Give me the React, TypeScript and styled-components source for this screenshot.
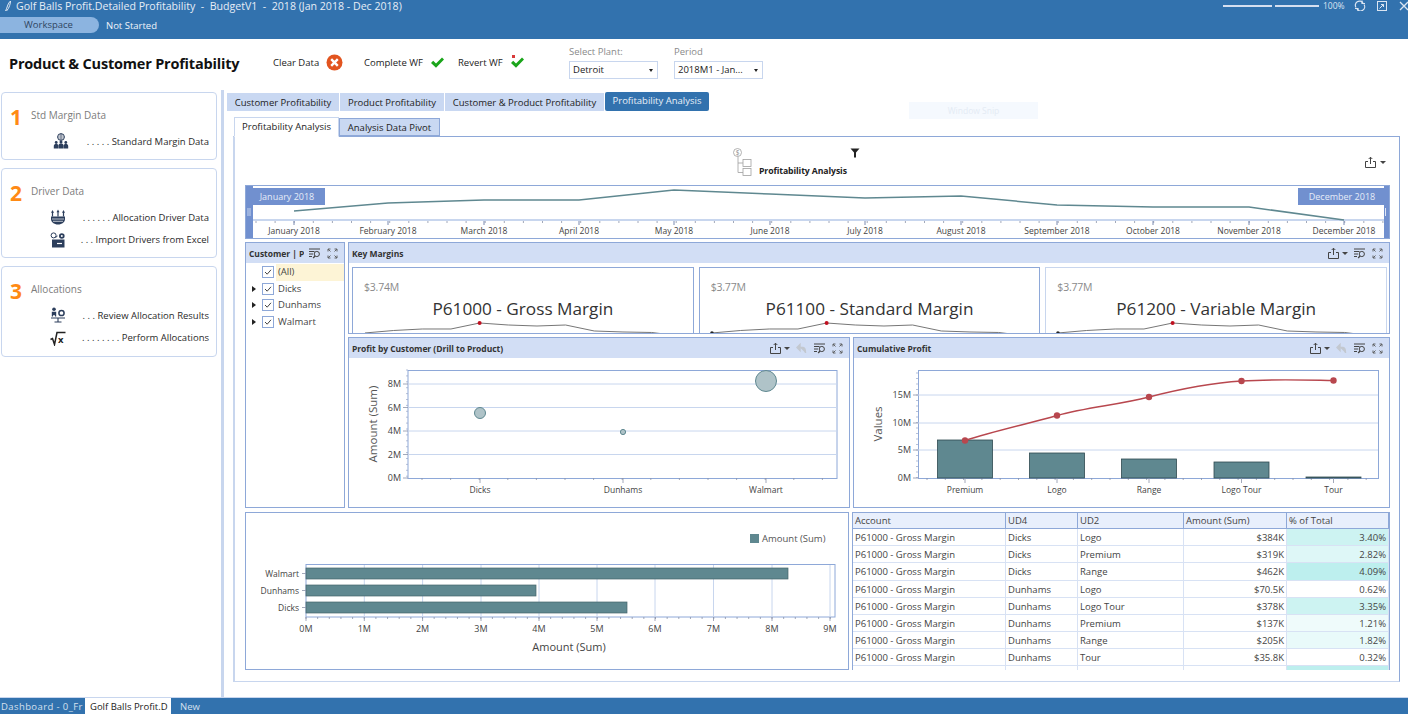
import React from "react";
import styled, { createGlobalStyle } from "styled-components";

const FONT = '"Open Sans", "Noto Sans", "Liberation Sans", sans-serif';
const BLUE = "#3272ae";
const LINE = "#8ea8d8";
const PALE = "#c8d6ee";
const HEAD = "#d2def5";
const TEAL = "#5f8890";

const Global = createGlobalStyle`
  html, body { margin: 0; padding: 0; background: #fff; }
  body { font-family: ${FONT}; color: #333; }
`;

const Page = styled.div`
  width: 1408px; height: 714px; display: flex; flex-direction: column; overflow: hidden; position: relative; background: #fff;
`;
const TopBar = styled.header`
  height: 39px; background: ${BLUE}; color: #e6edf6; flex: none; display: flex; flex-direction: column;
`;
const TitleRow = styled.div`
  height: 17px; display: flex; align-items: flex-start; padding-left: 5px;
`;
const AppTitle = styled.div`
  font-size: 10.6px; line-height: 13px; margin-left: 5px; white-space: pre; flex: 1;
`;
const WindowTools = styled.div`
  display: flex; align-items: center; height: 11px; color: #dbe5f2; overflow: hidden; width: 185px;
`;
const ZoomTrack = styled.span<{ $w: number }>`
  width: ${(p) => p.$w}px; height: 2px; background: #d5dff0; margin-right: 3px; flex: none;
`;
const ZoomText = styled.span`
  font-size: 8.5px; margin: 0 9px 0 1px; width: 22px; flex: none;
`;
const WindowIcon = styled.svg`
  width: 12px; height: 12px; flex: none; margin-right: 10px; display: block;
`;
const StatusRow = styled.div`
  display: flex; align-items: center; height: 16px;
`;
const Pill = styled.div`
  width: 99px; height: 16px; background: #8cb4e0; border-radius: 0 8px 8px 0; color: #2f4560; font-size: 9.5px; line-height: 16px; text-align: center; padding-right: 2px; box-sizing: border-box;
`;
const StatusText = styled.span`
  font-size: 9.5px; margin-left: 7px; color: #f0f4fa;
`;

const HeaderRow = styled.div`
  height: 51px; flex: none; display: flex; align-items: flex-start; position: relative;
`;
const PageTitle = styled.h1`
  margin: 15px 0 0 9px; width: 264px; flex: none; font-size: 14.5px; line-height: 20px; font-weight: 700; color: #111; letter-spacing: -0.2px;
`;
const Action = styled.div<{ $w: number }>`
  width: ${(p) => p.$w}px; flex: none; display: flex; align-items: center; height: 20px; margin-top: 13px; font-size: 9.5px; color: #222; gap: 7px;
`;
const FieldGroup = styled.div<{ $w: number }>`
  width: ${(p) => p.$w}px; flex: none; margin-top: 6px; display: flex; flex-direction: column;
`;
const FieldLabel = styled.label`
  font-size: 9.5px; line-height: 14px; color: #8a8a8a; height: 16px;
`;
const SelectBox = styled.div<{ $w: number }>`
  width: ${(p) => p.$w}px; height: 18px; box-sizing: border-box; border: 1px solid ${PALE}; font-size: 9.5px; line-height: 16px; padding-left: 3px; color: #222; position: relative; white-space: nowrap;
  &::after { content: ""; position: absolute; right: 4px; top: 7px; border: 2.5px solid transparent; border-top: 3px solid #222; }
`;

const Main = styled.main`
  flex: 1; display: flex; min-height: 0;
`;
const Sidebar = styled.aside`
  width: 224px; flex: none; box-sizing: border-box; padding: 2px 4px 0 1px; display: flex; flex-direction: column; gap: 8px; border-right: 3px solid ${PALE};
`;
const StepCard = styled.section<{ $h: number }>`
  height: ${(p) => p.$h}px; box-sizing: border-box; border: 1px solid ${PALE}; border-radius: 4px; padding: 0 7px 0 8px;
`;
const StepHead = styled.div`
  display: flex; align-items: center; height: 37px; box-sizing: border-box; padding-top: 7px;
`;
const StepNum = styled.span`
  width: 21px; flex: none; color: #ff8a14; font-size: 21px; font-weight: 700; line-height: 30px; margin-top: 3px;
`;
const StepTitle = styled.span`
  font-size: 10px; color: #7c7c7c;
`;
const StepItem = styled.div`
  height: 22.5px; display: flex; align-items: center; font-size: 9.5px; color: #2a2a2a; white-space: pre;
`;
const StepIcon = styled.svg<{ $left?: number }>`
  width: 16px; height: 16px; flex: none; margin-left: ${(p) => p.$left ?? 40}px; display: block; color: #2c3e5c;
`;
const StepLabel = styled.span`
  margin-left: auto;
`;

const Content = styled.div`
  flex: 1; min-width: 0; padding: 2px 0 0 3px; display: flex; flex-direction: column; position: relative;
`;
const TabBar = styled.nav`
  display: flex; gap: 1px; height: 19px; align-items: flex-end; flex: none;
`;
const MainTab = styled.div<{ $w: number; $on?: boolean }>`
  width: ${(p) => p.$w}px; height: ${(p) => (p.$on ? 19 : 18)}px; box-sizing: border-box; background: ${(p) => (p.$on ? BLUE : "#c9d8f2")}; color: ${(p) => (p.$on ? "#e9f0f8" : "#222")}; border-radius: ${(p) => (p.$on ? "2px" : "0")}; font-size: 9.5px; line-height: ${(p) => (p.$on ? 18 : 20)}px; text-align: center; white-space: nowrap;
`;
const SubTabs = styled.nav`
  display: flex; height: 20px; margin: 5px 0 0 7px; align-items: flex-end; flex: none; position: relative; z-index: 1;
`;
const SubTab = styled.div<{ $w: number; $on?: boolean }>`
  width: ${(p) => p.$w}px; height: ${(p) => (p.$on ? 20 : 18)}px; box-sizing: border-box; background: ${(p) => (p.$on ? "#fff" : "#c9d8f2")}; color: #222; border: 1px solid ${(p) => (p.$on ? PALE : LINE)}; border-bottom: ${(p) => (p.$on ? "1px solid #fff" : `1px solid ${LINE}`)}; font-size: 9.5px; line-height: ${(p) => (p.$on ? 17 : 18)}px; text-align: center; white-space: nowrap; margin-bottom: ${(p) => (p.$on ? "-1px" : "0")};
`;
const Board = styled.div`
  width: 1167px; height: 546px; box-sizing: border-box; margin-left: 6px; border: 1px solid ${LINE}; border-left: 2px solid ${PALE}; border-bottom-color: ${PALE}; padding: 0 10px 0 10px; display: flex; flex-direction: column;
`;
const BoardHead = styled.div`
  height: 48px; flex: none; position: relative; display: flex;
`;
const BoardBrand = styled.div`
  margin-left: 488px; display: flex; align-items: flex-end; padding-bottom: 8px; position: relative; gap: 6px;
`;
const BrandText = styled.span`
  font-size: 8.7px; font-weight: 700; color: #222; line-height: 11px; letter-spacing: -0.1px;
`;
const FilterIcon = styled.svg`
  width: 10px; height: 10px; margin: 11px 0 0 -3px; display: block; align-self: flex-start;
`;
const BoardExport = styled.div`
  margin-left: auto; margin-right: 3px; margin-top: 18px; display: flex; align-items: center; height: 14px; gap: 3px;
`;
const Caret = styled.span`
  width: 0; height: 0; border: 3px solid transparent; border-top: 3.5px solid #444; margin-top: 3px;
`;
const TimelineBox = styled.div`
  width: 1145px; height: 54px; flex: none; box-sizing: border-box; border: 1px solid ${LINE};
`;
const Svg = styled.svg`
  display: block;
`;
const AxisText = styled.text<{ $size?: number; $fill?: string; $weight?: number }>`
  font-family: ${FONT}; font-size: ${(p) => p.$size ?? 8.5}px; fill: ${(p) => p.$fill ?? "#444"}; font-weight: ${(p) => p.$weight ?? 400};
`;
const Upper = styled.div`
  display: grid; grid-template-columns: 100px 1fr; gap: 3px; height: 266px; margin-top: 3px; width: 1145px; flex: none;
`;
const Panel = styled.section`
  border: 1px solid ${LINE}; box-sizing: border-box; min-width: 0; background: #fff; overflow: hidden;
`;
const PanelHead = styled.div`
  height: 20px; background: ${HEAD}; display: flex; align-items: center; padding: 0 5px 0 3px; font-size: 8.5px; font-weight: 700; color: #333; white-space: nowrap; overflow: hidden; letter-spacing: -0.05px;
`;
const HeadTitle = styled.span<{ $clip?: number }>`
  ${(p) => (p.$clip ? `width: ${p.$clip}px; overflow: hidden; flex: none;` : "")}
`;
const HeadTools = styled.div`
  margin-left: auto; display: flex; align-items: center; gap: 5px; flex: none;
`;
const ToolGroup = styled.span`
  display: flex; align-items: center; gap: 2px;
`;
const ToolIcon = styled.svg`
  width: 13px; height: 13px; display: block; flex: none;
`;
const FilterList = styled.ul`
  list-style: none; margin: 1px 0 0; padding: 0;
`;
const FilterRow = styled.li`
  height: 16.5px; display: flex; align-items: center; font-size: 9.5px; color: #444; position: relative; padding-left: 16px;
`;
const Arrow = styled.span`
  position: absolute; left: 6px; top: 5px; width: 0; height: 0; border: 3px solid transparent; border-left: 4px solid #222;
`;
const Check = styled.span`
  width: 10px; height: 10px; border: 1px solid ${LINE}; flex: none; display: flex; background: #fff; box-sizing: content-box;
`;
const FilterText = styled.span<{ $hl?: boolean }>`
  margin-left: 2px; padding-left: 2px; flex: 1; line-height: 16.5px; background: ${(p) => (p.$hl ? "#fdf4d6" : "transparent")};
`;
const Right = styled.div`
  display: flex; flex-direction: column; gap: 3px; min-width: 0;
`;
const KeyPanel = styled(Panel)`
  height: 92px; flex: none;
`;
const KeyBody = styled.div`
  display: flex; gap: 5px; padding: 4px 2px 0 3px;
`;
const KeyCard = styled.article<{ $pale?: boolean }>`
  flex: 1; min-width: 0; height: 67px; box-sizing: border-box; border: 1px solid ${(p) => (p.$pale ? PALE : LINE)}; border-bottom: none; overflow: hidden;
`;
const KeyValue = styled.div`
  font-size: 10.5px; line-height: 14px; color: #8a8a8a; margin: 12px 0 0 11px; letter-spacing: -0.2px;
`;
const KeyTitle = styled.div`
  font-size: 17.2px; line-height: 22px; color: #333; text-align: center; height: 22px; margin-top: 4px; white-space: nowrap;
`;
const ChartsRow = styled.div`
  display: grid; grid-template-columns: 502px 1fr; gap: 3px; height: 171px;
`;
const Lower = styled.div`
  display: grid; grid-template-columns: 604px 1fr; gap: 3px; height: 158px; margin-top: 4px; width: 1145px; flex: none;
`;
const TableGrid = styled.div`
  display: grid; grid-template-columns: 153px 72px 106px 103px 1fr; grid-auto-rows: 17.17px; height: 158px; overflow: hidden; border-top: 1px solid ${LINE}; border-right: 1px solid ${LINE}; border-left: 1px solid ${LINE}; box-sizing: border-box; font-size: 9.5px; color: #444;
`;
const HeadCell = styled.div`
  background: #e8effc; height: 16px; line-height: 15px; padding: 0 2px; border-right: 1px solid ${LINE}; border-bottom: 1px solid ${LINE}; white-space: nowrap; box-sizing: border-box;
`;
const Cell = styled.div<{ $num?: boolean; $bg?: string }>`
  line-height: 17px; padding: 0 2px; margin-top: -1px; height: 17.17px; box-sizing: border-box; border-right: 1px solid #d8e2f4; border-bottom: 1px solid #d8e2f4; text-align: ${(p) => (p.$num ? "right" : "left")}; background: ${(p) => p.$bg ?? "transparent"}; white-space: nowrap; overflow: hidden;
`;
const Footer = styled.footer`
  height: 17px; flex: none; box-sizing: border-box; border-top: 1px solid ${PALE}; background: ${BLUE}; display: flex; font-size: 9.5px; line-height: 18px; color: #d5e0ee;
`;
const FootTab = styled.div<{ $w: number; $pad: number; $on?: boolean; $track?: number }>`
  width: ${(p) => p.$w}px; flex: none; white-space: nowrap; overflow: hidden; background: ${(p) => (p.$on ? "#fff" : "transparent")}; color: ${(p) => (p.$on ? "#222" : "#d5e0ee")}; padding-left: ${(p) => p.$pad}px; box-sizing: border-box; letter-spacing: ${(p) => p.$track ?? 0}px;
`;
const Snip = styled.div`
  position: absolute; left: 685px; top: 12px; width: 129px; height: 17px; background: #f5f9fe; color: #e4ebf4; font-size: 8.5px; line-height: 17px; text-align: center;
`;

const ExportIcon = () => (
  <ToolIcon viewBox="0 0 13 13" fill="none" stroke="#444" strokeWidth="1">
    <path d="M4 5.5H1.5V11.5H11.5V5.5H9M6.5 8V1.2M4.7 3L6.5 1.2L8.3 3" />
  </ToolIcon>
);
const SearchIcon = () => (
  <ToolIcon viewBox="0 0 13 13" fill="none" stroke="#444" strokeWidth="1">
    <path d="M1 2H12M1 4.5H6.5M1 7H5M1 9.5H4" />
    <circle cx="8.8" cy="7" r="2.6" />
    <path d="M7 9L5.2 11" strokeWidth="1.3" />
  </ToolIcon>
);
const ExpandIcon = () => (
  <ToolIcon viewBox="0 0 13 13" fill="none" stroke="#555" strokeWidth="0.9">
    <path d="M2 4.5V2H4.5M2.2 2.2L4.5 4.5M8.5 2H11V4.5M10.8 2.2L8.5 4.5M2 8.5V11H4.5M2.2 10.8L4.5 8.5M11 8.5V11H8.5M10.8 10.8L8.5 8.5" />
  </ToolIcon>
);
const UndoIcon = () => (
  <ToolIcon viewBox="0 0 13 13" fill="none" stroke="#c3c8d0" strokeWidth="1.4">
    <path d="M2 5.5L5 2.5V8.5ZM5 5.5H8C10 5.5 10.5 7.5 10.5 11" fill="#c3c8d0" />
  </ToolIcon>
);
const CheckMark = () => (
  <svg width="10" height="10" viewBox="0 0 10 10" fill="none" stroke="#444" strokeWidth="1">
    <path d="M2 5L4.2 7.2L8 2.8" />
  </svg>
);
const GreenCheck = ({ dot }: { dot?: boolean }) => (
  <svg width="15" height="15" viewBox="0 0 15 15">
    {dot && <rect x="2" y="0" width="3" height="3" fill="#d83a3a" />}
    <path d="M1 8L3.2 5.8L6 8.6L12 2.5L14 4.6L6 12.8Z" fill="#1aa51a" />
  </svg>
);
const RedX = () => (
  <svg width="17" height="17" viewBox="0 0 17 17">
    <circle cx="8.5" cy="8.5" r="8" fill="#e2541f" />
    <path d="M5.2 5.2L11.8 11.8M11.8 5.2L5.2 11.8" stroke="#fff" strokeWidth="2.4" />
  </svg>
);

const IconStd = () => (
  <StepIcon $left={43} viewBox="0 0 16 16" fill="currentColor">
    <circle cx="8" cy="4" r="3.4" fill="none" stroke="currentColor" strokeWidth="1" />
    <path d="M4.6 4H11.4M8 0.6V7.4M5.5 2H10.5M5.5 6H10.5" stroke="currentColor" strokeWidth="0.6" />
    <circle cx="3.2" cy="9.5" r="1.4" />
    <circle cx="8" cy="9" r="1.5" />
    <circle cx="12.8" cy="9.5" r="1.4" />
    <path d="M0.8 15.5V13C0.8 11.6 1.8 11 3.2 11C4.2 11 5 11.3 5.3 12V15.5ZM5.6 15.5V12.5C5.6 11 6.6 10.6 8 10.6C9.4 10.6 10.4 11 10.4 12.5V15.5ZM10.7 15.5V12C11 11.3 11.8 11 12.8 11C14.2 11 15.2 11.6 15.2 13V15.5Z" />
  </StepIcon>
);
const IconDriver = () => (
  <StepIcon viewBox="0 0 16 16" fill="currentColor">
    <path d="M1 7.5H15V10C15 13 12 15.5 8 15.5C4 15.5 1 13 1 10Z" />
    <path d="M2.5 1L4 3.8H3.1V7.5H1.9V3.8H1ZM8 0.5L9.5 3.3H8.6V7.5H7.4V3.3H6.5ZM13.5 1L15 3.8H14.1V7.5H12.9V3.8H12Z" />
    <path d="M2 10H14M3 12.3H13" stroke="#fff" strokeWidth="0.7" />
  </StepIcon>
);
const IconImport = () => (
  <StepIcon viewBox="0 0 16 16" fill="currentColor">
    <circle cx="3.6" cy="3.4" r="2.5" fill="none" stroke="currentColor" strokeWidth="1" />
    <circle cx="11.8" cy="4" r="2.8" />
    <circle cx="11.8" cy="4" r="1" fill="#fff" />
    <path d="M2 7.5H14.5V15.5H2Z" />
    <path d="M7 11.5H12" stroke="#fff" strokeWidth="1.2" />
    <path d="M5.5 5.5L7.5 4" stroke="currentColor" />
  </StepIcon>
);
const IconReview = () => (
  <StepIcon viewBox="0 0 16 16" fill="currentColor">
    <circle cx="4" cy="2.2" r="1.8" />
    <path d="M1.8 4.8H6.2V9.5H5V8.2H3V9.5H1.8Z" />
    <circle cx="11.5" cy="6" r="2.6" fill="none" stroke="currentColor" strokeWidth="1.5" />
    <path d="M1 11H15M8 11V14.5M4.5 15H11.5" stroke="currentColor" strokeWidth="1.1" fill="none" />
  </StepIcon>
);
const IconRoot = () => (
  <StepIcon viewBox="0 0 16 16" fill="none">
    <path d="M0.5 9.5L2.5 8.5L4.5 14.5L7 2.5H15.5" stroke="#222" strokeWidth="1.5" />
    <AxisText x="8" y="13" $size={9.5} $weight={700} $fill="#222">x</AxisText>
  </StepIcon>
);

const Tools = ({ exp, undo }: { exp?: boolean; undo?: boolean }) => (
  <HeadTools>
    {exp && (
      <ToolGroup>
        <ExportIcon />
        <Caret />
      </ToolGroup>
    )}
    {undo && <UndoIcon />}
    <SearchIcon />
    <ExpandIcon />
  </HeadTools>
);

const MONTHS = ["January", "February", "March", "April", "May", "June", "July", "August", "September", "October", "November", "December"];
const MX = [294, 388, 484, 579, 674, 770, 865, 961, 1057, 1153, 1249, 1344];
const MY = [211, 203, 200, 200, 190, 194, 198, 196, 205, 207, 207, 220];

const Timeline = () => {
  const ticks: number[] = [];
  for (let x = 256; x < 1384; x += 19.1) ticks.push(x);
  return (
    <TimelineBox>
      <Svg width="1143" height="52" viewBox="246 186 1143 52">
        <rect x="253" y="219" width="1131" height="2" fill={PALE} />
        {ticks.map((x) => (
          <line key={x} x1={x} x2={x} y1="221" y2="223" stroke="#8a93a8" strokeWidth="0.8" />
        ))}
        {MX.map((x, i) => (
          <g key={x}>
            <line x1={x} x2={x} y1="221" y2="225" stroke="#7a8ab0" strokeWidth="1" />
            <AxisText x={x} y="234" textAnchor="middle">{MONTHS[i]} 2018</AxisText>
          </g>
        ))}
        <polyline points={MX.map((x, i) => `${x},${MY[i]}`).join(" ")} fill="none" stroke="#5f8890" strokeWidth="1.5" />
        <rect x="246" y="186" width="7" height="52" fill="#7190cf" />
        <rect x="246" y="188" width="79" height="17" fill="#7190cf" />
        <AxisText x="287" y="199.5" textAnchor="middle" $size={9} $fill="#e6ecf8">January 2018</AxisText>
        <path d="M248 208V216M250 208V216" stroke="#dfe7f6" strokeWidth="0.8" />
        <rect x="1384" y="186" width="5" height="52" fill="#7190cf" />
        <rect x="1298" y="188" width="90" height="17" fill="#7190cf" />
        <AxisText x="1342" y="199.5" textAnchor="middle" $size={9} $fill="#e6ecf8">December 2018</AxisText>
        <path d="M1385.5 208V216" stroke="#dfe7f6" strokeWidth="1" />
      </Svg>
    </TimelineBox>
  );
};

const SPARK = [333, 330.5, 329, 329, 323, 325, 326, 325, 331, 332, 332.5, 336];
const Spark = ({ w, dot }: { w: number; dot?: boolean }) => (
  <Svg width={w} height="13" viewBox="0 320 340 13">
    <polyline points={SPARK.map((y, i) => `${12 + i * 28.75},${y}`).join(" ")} fill="none" stroke="#666" strokeWidth="0.9" />
    {dot && <circle cx="12" cy="333" r="1.8" fill="#222" />}
    <circle cx="127" cy="323" r="2" fill="#c01020" />
  </Svg>
);

const Scatter = () => {
  const minor: number[] = [];
  for (let y = 370; y <= 478; y += 5.9) minor.push(y);
  const xm: number[] = [];
  for (let x = 422; x < 837; x += 28.6) xm.push(x);
  return (
    <Svg width="500" height="150" viewBox="349 358 500 150">
      <rect x="408" y="370.5" width="429" height="108" fill="#fff" stroke={LINE} />
      {[384, 407.5, 431, 454.5].map((y) => (
        <line key={y} x1="408" x2="837" y1={y} y2={y} stroke={PALE} strokeWidth="1" />
      ))}
      {minor.map((y) => (
        <line key={y} x1="406" x2="408" y1={y} y2={y} stroke="#9aa8c8" strokeWidth="0.7" />
      ))}
      {xm.map((x) => (
        <line key={x} x1={x} x2={x} y1="478" y2="480" stroke="#8a93a8" strokeWidth="0.8" />
      ))}
      {[["8M", 384], ["6M", 407.5], ["4M", 431], ["2M", 454.5], ["0M", 478]].map(([t, y]) => (
        <g key={t as string}>
          <line x1="403" x2="408" y1={y as number} y2={y as number} stroke="#8a93a8" strokeWidth="0.8" />
          <AxisText x="401" y={(y as number) + 3} textAnchor="end" $size={9}>{t}</AxisText>
        </g>
      ))}
      <AxisText transform="translate(377,424) rotate(-90)" textAnchor="middle" $size={11.5} $fill="#555">Amount (Sum)</AxisText>
      {[["Dicks", 480, 413, 5.5], ["Dunhams", 623, 432, 2.6], ["Walmart", 766, 381, 10.5]].map(([t, x, y, r]) => (
        <g key={t as string}>
          <circle cx={x as number} cy={y as number} r={r as number} fill="#afc3c8" stroke="#5f8890" strokeWidth="1" />
          <line x1={x as number} x2={x as number} y1="478" y2="483" stroke="#8a93a8" strokeWidth="0.8" />
          <AxisText x={x as number} y="493" textAnchor="middle">{t}</AxisText>
        </g>
      ))}
    </Svg>
  );
};

const Cumulative = () => {
  const minor: number[] = [];
  for (let y = 373; y <= 478; y += 5.5) minor.push(y);
  const xm: number[] = [];
  for (let x = 927; x < 1378; x += 18.3) xm.push(x);
  const bars: [string, number, number][] = [["Premium", 965, 440], ["Logo", 1057, 453], ["Range", 1149, 459], ["Logo Tour", 1241.5, 462], ["Tour", 1333.5, 477]];
  const pts = [[965, 440.5], [1057, 415.5], [1149, 397], [1241.5, 381], [1333.5, 380.5]];
  return (
    <Svg width="535" height="150" viewBox="854 358 535 150">
      <rect x="918.5" y="370.5" width="460" height="108" fill="#fff" stroke={LINE} />
      {[395, 423, 450].map((y) => (
        <line key={y} x1="918" x2="1378" y1={y} y2={y} stroke={PALE} strokeWidth="1" />
      ))}
      {minor.map((y) => (
        <line key={y} x1="916" x2="918" y1={y} y2={y} stroke="#9aa8c8" strokeWidth="0.7" />
      ))}
      {xm.map((x) => (
        <line key={x} x1={x} x2={x} y1="478" y2="480" stroke="#8a93a8" strokeWidth="0.8" />
      ))}
      {[["15M", 395], ["10M", 423], ["5M", 450], ["0M", 478]].map(([t, y]) => (
        <g key={t as string}>
          <line x1="913" x2="918" y1={y as number} y2={y as number} stroke="#8a93a8" strokeWidth="0.8" />
          <AxisText x="911" y={(y as number) + 3} textAnchor="end" $size={9}>{t}</AxisText>
        </g>
      ))}
      <AxisText transform="translate(882,424) rotate(-90)" textAnchor="middle" $size={11.5} $fill="#555">Values</AxisText>
      {bars.map(([t, x, y]) => (
        <g key={t}>
          <rect x={x - 27.5} y={y} width="55" height={478 - y} fill={TEAL} stroke="#2f4a50" strokeWidth="0.8" />
          <line x1={x} x2={x} y1="478" y2="483" stroke="#8a93a8" strokeWidth="0.8" />
          <AxisText x={x} y="493" textAnchor="middle">{t}</AxisText>
        </g>
      ))}
      <path d="M965 440.5C995 431 1027 424 1057 415.5C1088 407 1118 405 1149 397C1180 389 1210 383 1241.5 381C1272 379 1303 380 1333.5 380.5" fill="none" stroke="#b8474e" strokeWidth="1.4" />
      {pts.map(([x, y]) => (
        <circle key={x} cx={x} cy={y} r="3.2" fill="#b8474e" />
      ))}
    </Svg>
  );
};

const HBars = () => {
  const xt = [306, 364.3, 422.6, 481, 539, 597, 655, 713.5, 772, 830];
  const minor: number[] = [];
  for (let x = 306; x < 835; x += 11.65) minor.push(x);
  const bars: [string, number, number][] = [["Walmart", 568, 788], ["Dunhams", 585, 536], ["Dicks", 602, 627]];
  return (
    <Svg width="602" height="156" viewBox="246 513 602 156">
      <rect x="750" y="534" width="9" height="9" fill={TEAL} />
      <AxisText x="762" y="542" $size={9.5} $fill="#555">Amount (Sum)</AxisText>
      <rect x="306" y="564.5" width="529" height="52.5" fill="#fff" stroke={LINE} />
      {xt.slice(1).map((x) => (
        <line key={x} x1={x} x2={x} y1="565" y2="617" stroke={PALE} strokeWidth="1" />
      ))}
      {minor.map((x) => (
        <line key={x} x1={x} x2={x} y1="617" y2="619" stroke="#8a93a8" strokeWidth="0.8" />
      ))}
      {xt.map((x, i) => (
        <g key={x}>
          <line x1={x} x2={x} y1="617" y2="621" stroke="#8a93a8" strokeWidth="0.8" />
          <AxisText x={x} y="632" textAnchor="middle" $size={9}>{i}M</AxisText>
        </g>
      ))}
      {bars.map(([t, y, x]) => (
        <g key={t}>
          <rect x="306" y={y} width={x - 306} height="11" fill={TEAL} stroke="#46666c" strokeWidth="0.7" />
          <line x1="302" x2="306" y1={y + 5.5} y2={y + 5.5} stroke="#8a93a8" strokeWidth="0.8" />
          <AxisText x="299" y={y + 8.5} textAnchor="end">{t}</AxisText>
        </g>
      ))}
      <AxisText x="569" y="651" textAnchor="middle" $size={11} $fill="#444">Amount (Sum)</AxisText>
    </Svg>
  );
};

const ROWS: [string, string, string, string, string][] = [
  ["Dicks", "Logo", "$384K", "3.40%", "#cdf3f2"],
  ["Dicks", "Premium", "$319K", "2.82%", "#def7f7"],
  ["Dicks", "Range", "$462K", "4.09%", "#bdefee"],
  ["Dunhams", "Logo", "$70.5K", "0.62%", "#fff"],
  ["Dunhams", "Logo Tour", "$378K", "3.35%", "#cdf3f2"],
  ["Dunhams", "Premium", "$137K", "1.21%", "#effbfb"],
  ["Dunhams", "Range", "$205K", "1.82%", "#e9fafa"],
  ["Dunhams", "Tour", "$35.8K", "0.32%", "#fff"],
  ["", "", "", "", "#bdefee"],
];

export default function App() {
  return (
    <Page>
      <Global />
      <TopBar>
        <TitleRow>
          <svg width="6" height="12" viewBox="0 0 6 12" fill="none" stroke="#dfe8f3" strokeWidth="1">
            <path d="M0.5 11C2 9 2.5 3 5.5 1C5.5 3 4.5 8 1.5 11" />
          </svg>
          <AppTitle>{"Golf Balls Profit.Detailed Profitability  -  BudgetV1  -  2018 (Jan 2018 - Dec 2018)"}</AppTitle>
          <WindowTools>
            <ZoomTrack $w={49} />
            <ZoomTrack $w={44} />
            <ZoomText>100%</ZoomText>
            <WindowIcon viewBox="0 0 12 12" fill="none" stroke="#dbe5f2" strokeWidth="1.2">
              <path d="M2 7.5A4 4 0 0 1 9 3M10 4.5A4 4 0 0 1 3 9" />
              <path d="M8 0.5V3.5H11M4 11.5V8.5H1" />
            </WindowIcon>
            <WindowIcon viewBox="0 0 12 12" fill="none" stroke="#dbe5f2" strokeWidth="1">
              <rect x="1.5" y="1.5" width="9" height="9" />
              <path d="M3.5 8.5L7.5 4.5M5 4.5H7.5V7" />
            </WindowIcon>
            <WindowIcon viewBox="0 0 12 12" fill="none" stroke="#dbe5f2" strokeWidth="1.3">
              <path d="M2 2L10 10M10 2L2 10" />
            </WindowIcon>
          </WindowTools>
        </TitleRow>
        <StatusRow>
          <Pill>Workspace</Pill>
          <StatusText>Not Started</StatusText>
        </StatusRow>
      </TopBar>
      <HeaderRow>
        <PageTitle>Product &amp; Customer Profitability</PageTitle>
        <Action $w={91}>Clear Data <RedX /></Action>
        <Action $w={94}>Complete WF <GreenCheck /></Action>
        <Action $w={111}>Revert WF <GreenCheck dot /></Action>
        <FieldGroup $w={105}>
          <FieldLabel>Select Plant:</FieldLabel>
          <SelectBox $w={89}>Detroit</SelectBox>
        </FieldGroup>
        <FieldGroup $w={90}>
          <FieldLabel>Period</FieldLabel>
          <SelectBox $w={89}>2018M1 - Jan...</SelectBox>
        </FieldGroup>
      </HeaderRow>
      <Main>
        <Sidebar>
          <StepCard $h={68}>
            <StepHead><StepNum>1</StepNum><StepTitle>Std Margin Data</StepTitle></StepHead>
            <StepItem><IconStd /><StepLabel>{". . . . . Standard Margin Data"}</StepLabel></StepItem>
          </StepCard>
          <StepCard $h={90}>
            <StepHead><StepNum>2</StepNum><StepTitle>Driver Data</StepTitle></StepHead>
            <StepItem><IconDriver /><StepLabel>{". . . . . . Allocation Driver Data"}</StepLabel></StepItem>
            <StepItem><IconImport /><StepLabel>{". . . Import Drivers from Excel"}</StepLabel></StepItem>
          </StepCard>
          <StepCard $h={91}>
            <StepHead><StepNum>3</StepNum><StepTitle>Allocations</StepTitle></StepHead>
            <StepItem><IconReview /><StepLabel>{". . . Review Allocation Results"}</StepLabel></StepItem>
            <StepItem><IconRoot /><StepLabel>{". . . . . . . . Perform Allocations"}</StepLabel></StepItem>
          </StepCard>
        </Sidebar>
        <Content>
          <TabBar>
            <MainTab $w={112}>Customer Profitability</MainTab>
            <MainTab $w={104}>Product Profitability</MainTab>
            <MainTab $w={159}>Customer &amp; Product Profitability</MainTab>
            <MainTab $w={104} $on>Profitability Analysis</MainTab>
          </TabBar>
          <SubTabs>
            <SubTab $w={105} $on>Profitability Analysis</SubTab>
            <SubTab $w={101}>Analysis Data Pivot</SubTab>
          </SubTabs>
          <Board>
            <BoardHead>
              <BoardBrand>
                <svg width="20" height="29" viewBox="0 0 20 29" fill="none" stroke="#a0a0a0" strokeWidth="0.8">
                  <circle cx="4.5" cy="4.5" r="4" />
                  <path d="M5 8.5V24.5H10M5 15H10" />
                  <rect x="10" y="11.5" width="8" height="7" />
                  <rect x="10" y="20.5" width="8" height="7" />
                  <AxisText x="4.5" y="7" textAnchor="middle" $size={6.5} $fill="#8a8a8a" stroke="none">$</AxisText>
                </svg>
                <BrandText>Profitability Analysis</BrandText>
                <FilterIcon viewBox="0 0 10 10"><path d="M0.5 0.5H9.5L6 4.5V9.5H4V4.5Z" fill="#222" /></FilterIcon>
              </BoardBrand>
              <BoardExport>
                <ExportIcon />
                <Caret />
              </BoardExport>
            </BoardHead>
            <Timeline />
            <Upper>
              <Panel>
                <PanelHead>
                  <HeadTitle $clip={55}>Customer | Product</HeadTitle>
                  <Tools />
                </PanelHead>
                <FilterList>
                  {["(All)", "Dicks", "Dunhams", "Walmart"].map((t, i) => (
                    <FilterRow key={t}>
                      {i > 0 && <Arrow />}
                      <Check><CheckMark /></Check>
                      <FilterText $hl={i === 0}>{t}</FilterText>
                    </FilterRow>
                  ))}
                </FilterList>
              </Panel>
              <Right>
                <KeyPanel>
                  <PanelHead>Key Margins<Tools exp /></PanelHead>
                  <KeyBody>
                    <KeyCard>
                      <KeyValue>$3.74M</KeyValue>
                      <KeyTitle>P61000 - Gross Margin</KeyTitle>
                      <Spark w={339} />
                    </KeyCard>
                    <KeyCard>
                      <KeyValue>$3.77M</KeyValue>
                      <KeyTitle>P61100 - Standard Margin</KeyTitle>
                      <Spark w={339} dot />
                    </KeyCard>
                    <KeyCard $pale>
                      <KeyValue>$3.77M</KeyValue>
                      <KeyTitle>P61200 - Variable Margin</KeyTitle>
                      <Spark w={339} dot />
                    </KeyCard>
                  </KeyBody>
                </KeyPanel>
                <ChartsRow>
                  <Panel>
                    <PanelHead>Profit by Customer (Drill to Product)<Tools exp undo /></PanelHead>
                    <Scatter />
                  </Panel>
                  <Panel>
                    <PanelHead>Cumulative Profit<Tools exp undo /></PanelHead>
                    <Cumulative />
                  </Panel>
                </ChartsRow>
              </Right>
            </Upper>
            <Lower>
              <Panel><HBars /></Panel>
              <TableGrid>
                {["Account", "UD4", "UD2", "Amount (Sum)", "% of Total"].map((h) => (
                  <HeadCell key={h}>{h}</HeadCell>
                ))}
                {ROWS.map(([a, b, c, d, bg], i) => (
                  <React.Fragment key={i}>
                    <Cell>{a ? "P61000 - Gross Margin" : ""}</Cell>
                    <Cell>{a}</Cell>
                    <Cell>{b}</Cell>
                    <Cell $num>{c}</Cell>
                    <Cell $num $bg={bg}>{d}</Cell>
                  </React.Fragment>
                ))}
              </TableGrid>
            </Lower>
          </Board>
          <Snip>Window Snip</Snip>
        </Content>
      </Main>
      <Footer>
        <FootTab $w={85} $pad={1} $track={0.4}>Dashboard - 0_Fr</FootTab>
        <FootTab $w={86} $pad={5} $on>Golf Balls Profit.D</FootTab>
        <FootTab $w={60} $pad={9}>New</FootTab>
      </Footer>
    </Page>
  );
}
